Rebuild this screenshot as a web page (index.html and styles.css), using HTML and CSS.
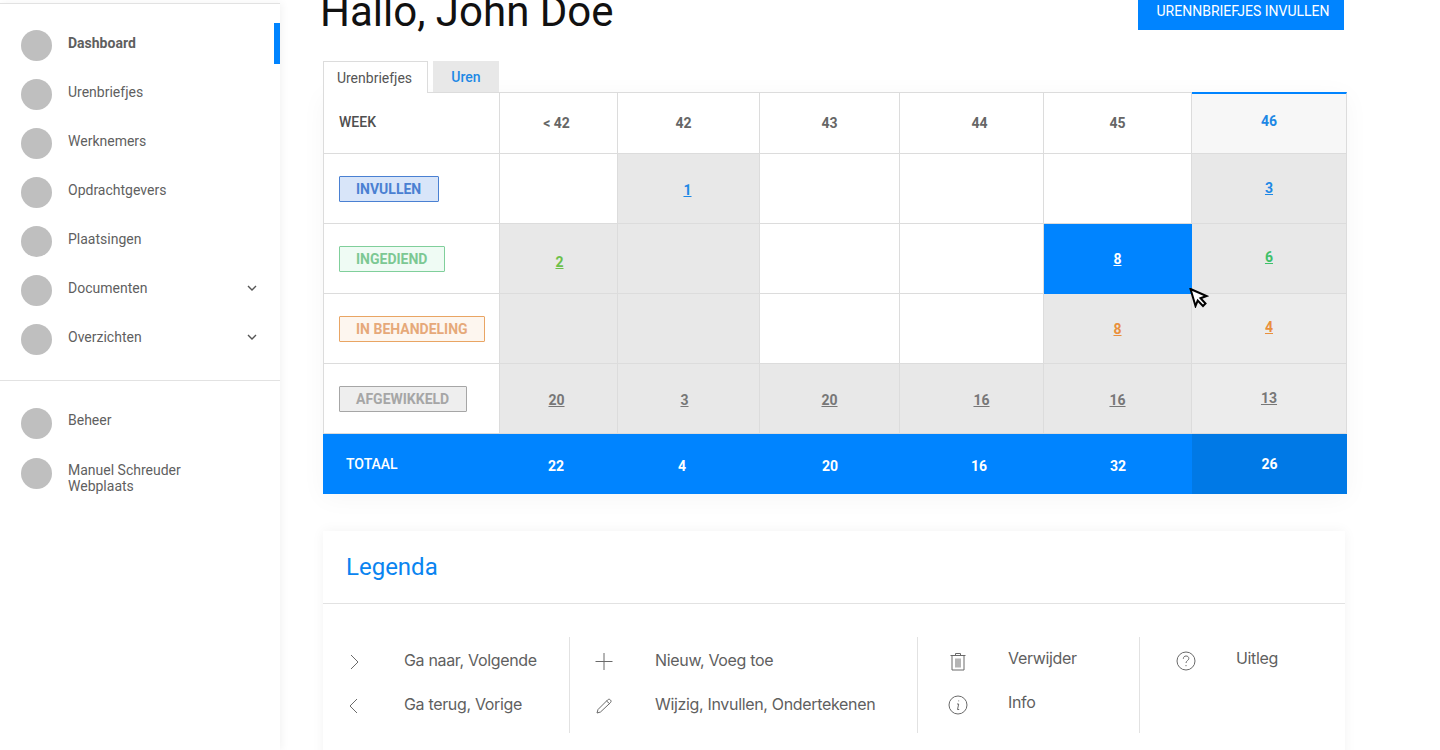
FILE: index.html
```html
<!DOCTYPE html>
<html lang="en">
<head>
  <meta charset="UTF-8" />
  <title>Dashboard</title>
  <link rel="stylesheet" href="styles.css">
</head>
<body>
  <div class="sidebar">
    <ul class="nav">
      <li class="active"><span class="dot"></span><a href="#">Dashboard</a></li>
      <li><span class="dot"></span><a href="#">Urenbriefjes</a></li>
      <li><span class="dot"></span><a href="#">Werknemers</a></li>
      <li><span class="dot"></span><a href="#">Opdrachtgevers</a></li>
      <li><span class="dot"></span><a href="#">Plaatsingen</a></li>
      <li><span class="dot"></span><a href="#">Documenten</a>
        <svg class="caret" viewBox="0 0 10 6"><path d="M1 1l4 4 4-4"/></svg></li>
      <li><span class="dot"></span><a href="#">Overzichten</a>
        <svg class="caret" viewBox="0 0 10 6"><path d="M1 1l4 4 4-4"/></svg></li>
    </ul>
    <ul class="nav nav-bottom">
      <li><span class="dot"></span><a href="#">Beheer</a></li>
      <li><span class="dot"></span><a class="two-line" href="#">Manuel Schreuder<br>Webplaats</a></li>
    </ul>
  </div>

  <div class="main-content">
    <div class="page-head">
      <h1>Hallo, John Doe</h1>
      <a class="btn" href="#">URENNBRIEFJES INVULLEN</a>
    </div>

    <div class="tabs">
      <div class="tab current">Urenbriefjes</div>
      <div class="tab">Uren</div>
    </div>

    <div class="week-table">
      <div class="cell label"><span class="week-title">WEEK</span></div>
      <div class="cell head left-4">&lt; 42</div>
      <div class="cell head left-10">42</div>
      <div class="cell head">43</div>
      <div class="cell head right-16">44</div>
      <div class="cell head">45</div>
      <div class="cell head now">46</div>

      <div class="cell label"><span class="badge invullen">INVULLEN</span></div>
      <div class="cell"></div>
      <div class="cell grey lowest left-2"><a class="num blue" href="#">1</a></div>
      <div class="cell"></div>
      <div class="cell"></div>
      <div class="cell"></div>
      <div class="cell grey"><a class="num blue" href="#">3</a></div>

      <div class="cell label"><span class="badge ingediend">INGEDIEND</span></div>
      <div class="cell grey lower right-2"><a class="num lime" href="#">2</a></div>
      <div class="cell grey"></div>
      <div class="cell"></div>
      <div class="cell"></div>
      <div class="cell active low-2"><a class="num white" href="#">8</a></div>
      <div class="cell grey up-2"><a class="num green" href="#">6</a></div>

      <div class="cell label"><span class="badge behandeling">IN BEHANDELING</span></div>
      <div class="cell grey"></div>
      <div class="cell grey"></div>
      <div class="cell"></div>
      <div class="cell"></div>
      <div class="cell grey low"><a class="num orange" href="#">8</a></div>
      <div class="cell soft up-2"><a class="num orange" href="#">4</a></div>

      <div class="cell label"><span class="badge afgewikkeld">AFGEWIKKELD</span></div>
      <div class="cell grey lowest left-4"><a class="num dark" href="#">20</a></div>
      <div class="cell grey lowest left-8"><a class="num dark" href="#">3</a></div>
      <div class="cell grey lowest"><a class="num dark" href="#">20</a></div>
      <div class="cell grey lowest right-20"><a class="num dark" href="#">16</a></div>
      <div class="cell grey lowest"><a class="num dark" href="#">16</a></div>
      <div class="cell soft"><a class="num dark" href="#">13</a></div>

      <div class="total first">TOTAAL</div>
      <div class="total left-6">22</div>
      <div class="total left-14">4</div>
      <div class="total">20</div>
      <div class="total right-14">16</div>
      <div class="total">32</div>
      <div class="total now">26</div>
    </div>

    <div class="legend">
      <h2>Legenda</h2>
      <div class="legend-body">
        <div class="legend-col col-a">
          <div class="legend-row">
            <svg class="ico" viewBox="0 0 20 20"><path d="M7 4l7 7-7 7"/></svg>
            <span>Ga naar, Volgende</span>
          </div>
          <div class="legend-row">
            <svg class="ico" viewBox="0 0 20 20"><path d="M13 4l-7 7 7 7"/></svg>
            <span>Ga terug, Vorige</span>
          </div>
        </div>
        <div class="legend-col col-b">
          <div class="legend-row">
            <svg class="ico" viewBox="0 0 20 20"><path d="M10 2v17M1.500 10.500h17"/></svg>
            <span>Nieuw, Voeg toe</span>
          </div>
          <div class="legend-row">
            <svg class="ico" viewBox="0 0 20 20"><path d="M4 14.500L13.500 5c1-1 2.200-1 3 0s.8 1.800-.2 2.800L6.500 17 3 18zM12.500 6l3.500 3"/></svg>
            <span>Wijzig, Invullen, Ondertekenen</span>
          </div>
        </div>
        <div class="legend-col col-c">
          <div class="legend-row up">
            <svg class="ico" viewBox="0 0 20 20"><path d="M2.500 4.500h15M7.500 4.500V2.500h5v2M4 4.500V19h12V4.500M8 7.500v9M10 7.500v9M12 7.500v9"/></svg>
            <span>Verwijder</span>
          </div>
          <div class="legend-row up">
            <svg class="ico" viewBox="0 0 20 20"><circle cx="10" cy="10" r="9"/><path d="M10.700 5.500v.8M9 9h1.700l-1.200 5.500h1.700"/></svg>
            <span>Info</span>
          </div>
        </div>
        <div class="legend-col col-d">
          <div class="legend-row up">
            <svg class="ico" viewBox="0 0 20 20"><circle cx="10" cy="10" r="9"/><path d="M7.300 7.800c0-1.800 1.200-2.800 2.800-2.800s2.700 1 2.700 2.400c0 2.300-2.800 2.200-2.800 4.600M10 14v1.200"/></svg>
            <span>Uitleg</span>
          </div>
        </div>
      </div>
    </div>
  </div>

  <svg class="cursor" viewBox="0 0 20 20"><path d="M1.500 1l16 7-6 2.200 5 5.300-2.500 2.500-5.300-5.400L6.500 18z"/></svg>
</body>
</html>
```

FILE: styles.css
```css
* {
  box-sizing: border-box;
}
html, body {
  height: 100%;
}
body {
  margin: 0;
  font-family: Roboto, "Liberation Sans", sans-serif;
  display: flex;
  height: 750px;
  overflow: hidden;
  background-color: #fff;
  color: #5f5f5f;
}
a {
  color: inherit;
  text-decoration: none;
}

/* sidebar */
.sidebar {
  width: 280px;
  flex-shrink: 0;
  margin-top: 3px;
  border-top: 1px solid #e2e2e2;
  box-shadow: 2px 0 8px rgba(0, 0, 0, 0.05);
  padding-top: 17px;
}
.nav {
  list-style: none;
  margin: 0;
  padding: 0 0 16px;
}
.nav li {
  display: flex;
  align-items: center;
  position: relative;
  height: 49px;
  padding-left: 21px;
  font-size: 14px;
  line-height: 16px;
}
.nav a {
  padding-bottom: 6px;
}
.nav li.active {
  font-weight: 700;
}
.nav li.active::after {
  content: "";
  position: absolute;
  right: 0;
  top: 2px;
  width: 6px;
  height: 41px;
  background-color: #0084ff;
}
.dot {
  width: 31px;
  height: 31px;
  border-radius: 50%;
  background-color: #bfbfbf;
  margin-right: 16px;
  flex-shrink: 0;
}
.caret {
  width: 10px;
  height: 6px;
  margin-left: auto;
  margin-right: 23px;
  margin-bottom: 6px;
  fill: none;
  stroke: #555;
  stroke-width: 1.400;
}
.nav-bottom {
  border-top: 1px solid #e2e2e2;
  padding-top: 17px;
}
.nav-bottom li {
  height: 50px;
}
.nav .two-line {
  padding: 10px 0 0;
}

/* main */
.main-content {
  flex: 1;
  padding-left: 43px;
  margin-top: -14px;
}
.page-head {
  display: flex;
  justify-content: space-between;
  align-items: flex-start;
  width: 1024px;
  height: 75px;
}
h1 {
  margin: 0;
  font-size: 42px;
  font-weight: 400;
  line-height: 52px;
  color: #111;
  margin-left: -3px;
}
.btn {
  display: block;
  width: 206px;
  height: 44px;
  margin-right: 3px;
  padding-left: 4px;
  background-color: #0084ff;
  color: #fff;
  font-size: 14px;
  line-height: 50px;
  text-align: center;
}

.tabs {
  display: flex;
  gap: 5px;
  height: 31px;
}
.tab {
  width: 66px;
  height: 31px;
  background-color: #e8e8e8;
  color: #1e88e5;
  font-size: 14px;
  font-weight: 500;
  line-height: 32px;
  text-align: center;
}
.tab.current {
  width: 105px;
  height: 32px;
  padding-right: 2px;
  background-color: #fff;
  color: #555;
  font-weight: 400;
  line-height: 32px;
  border: 1px solid #dcdcdc;
  border-bottom: 0;
  position: relative;
}

/* week table */
.week-table {
  display: grid;
  grid-template-columns: 177px 118px 142px 140px 144px 148px 155px;
  grid-template-rows: 61px 70px 70px 70px 70px 60px;
  width: 1024px;
  border-top: 1px solid #dcdcdc;
  box-shadow: 0 4px 24px rgba(0, 0, 0, 0.04);
}
.cell {
  display: flex;
  align-items: center;
  justify-content: center;
  padding-bottom: 2px;
  border-right: 1px solid #dcdcdc;
  border-bottom: 1px solid #dcdcdc;
  font-size: 14px;
}
.cell.label {
  justify-content: flex-start;
  padding-left: 15px;
  border-left: 1px solid #dcdcdc;
}
.week-title {
  font-weight: 500;
  color: #4f4f4f;
}
.head {
  font-weight: 700;
  color: #666;
  padding-top: 1px;
}
.head.now {
  margin-top: -1px;
  border-top: 2px solid #0084ff;
  background-color: #f7f7f7;
  color: #1e88e5;
  padding: 0 0 5px;
}
.grey {
  background-color: #e8e8e8;
}
.soft {
  background-color: #ececec;
}
.cell.active {
  background-color: #0084ff;
  border-color: #0084ff;
}
.low {
  padding-top: 3px;
}
.low-2 {
  padding-top: 2px;
}
.lowest {
  padding-top: 5px;
}
.lower {
  padding-top: 9px;
}
.up-2 {
  padding-bottom: 4px;
}
.left-2 {
  padding-right: 2px;
}
.left-4 {
  padding-right: 4px;
}
.left-6 {
  padding-right: 6px;
}
.left-8 {
  padding-right: 8px;
}
.left-10 {
  padding-right: 10px;
}
.left-14 {
  padding-right: 14px;
}
.right-2 {
  padding-left: 2px;
}
.right-14 {
  padding-left: 14px;
}
.right-16 {
  padding-left: 16px;
}
.right-20 {
  padding-left: 20px;
}

.num {
  font-weight: 700;
  text-decoration: underline;
}
.blue { color: #1e88e5; }
.lime { color: #6cc04a; }
.green { color: #3fc06a; }
.white { color: #fff; }
.orange { color: #e98f3c; }
.dark { color: #777; }

.badge {
  display: block;
  height: 26px;
  padding-left: 16px;
  border: 1px solid;
  border-radius: 1px;
  font-size: 14px;
  font-weight: 700;
  line-height: 24px;
  margin-top: 2px;
}
.invullen {
  width: 100px;
  background-color: #d8e5f9;
  border-color: #4a80d2;
  color: #4a80d2;
}
.ingediend {
  width: 106px;
  background-color: #effbf4;
  border-color: #80cf9b;
  color: #7cc893;
}
.behandeling {
  width: 146px;
  background-color: #fdf6ef;
  border-color: #e9a564;
  color: #e6a97a;
}
.afgewikkeld {
  width: 128px;
  background-color: #eee;
  border-color: #a6a6a6;
  color: #a6a6a6;
}

.total {
  display: flex;
  align-items: center;
  justify-content: center;
  background-color: #0084ff;
  color: #fff;
  font-size: 14px;
  font-weight: 700;
  padding-top: 3px;
}
.total.first {
  justify-content: flex-start;
  padding: 0 0 0 23px;
  font-weight: 500;
}
.total.now {
  background-color: #0079e6;
  padding: 0 0 1px;
}

/* legend */
.legend {
  width: 1022px;
  height: 260px;
  margin-top: 37px;
  box-shadow: 0 0 12px rgba(0, 0, 0, 0.05);
}
.legend h2 {
  margin: 0;
  height: 73px;
  padding-left: 23px;
  border-bottom: 1px solid #e2e2e2;
  font-size: 24px;
  font-weight: 400;
  line-height: 73px;
  color: #0a84f0;
}
.legend-body {
  display: flex;
  padding-top: 33px;
  font-family: Inter, "Liberation Sans", sans-serif;
  font-size: 16px;
  letter-spacing: -0.33px;
  color: #5f5f5f;
}
.legend-col {
  height: 96px;
  border-right: 1px solid #e2e2e2;
  padding-top: 2px;
}
.col-a { width: 247px; }
.col-b { width: 348px; }
.col-c { width: 222px; }
.col-d { border-right: 0; }
.legend-row {
  display: flex;
  align-items: center;
  height: 44px;
}
.legend-row span {
  padding-bottom: 3px;
}
.legend-row.up span {
  padding-bottom: 7px;
}
.ico {
  width: 20px;
  height: 20px;
  flex-shrink: 0;
  fill: none;
  stroke: #6a6a6a;
  stroke-width: 1;
}
.col-a .ico { margin: 0 40px 0 21px; }
.col-b .ico { margin: 0 41px 0 24px; }
.col-c .ico { margin: 0 40px 0 30px; }
.col-d .ico { margin: 0 40px 0 36px; }

.cursor {
  position: absolute;
  left: 1189px;
  top: 288px;
  width: 20px;
  height: 20px;
  fill: #fff;
  stroke: #000;
  stroke-width: 2;
}
```
